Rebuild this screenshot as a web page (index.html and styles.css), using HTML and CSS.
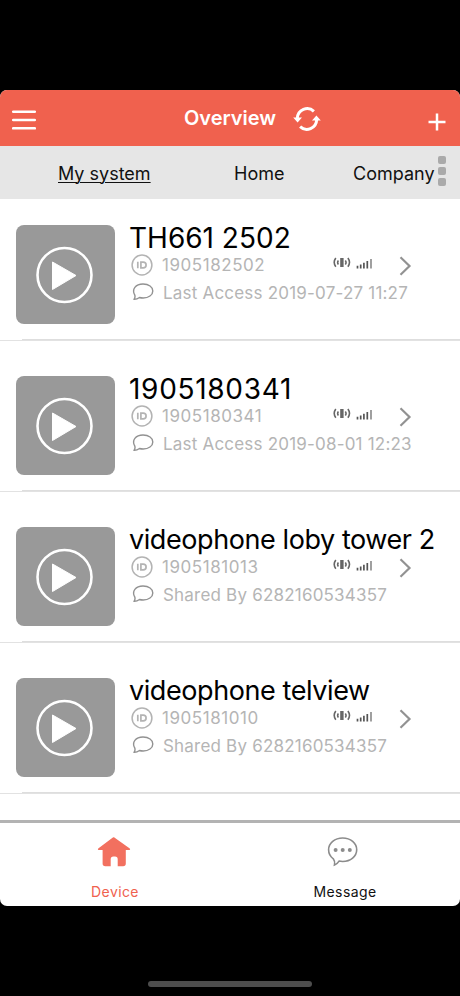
FILE: index.html
```html
<!DOCTYPE html>
<html lang="en">
<head>
    <meta charset="UTF-8">
    <meta name="viewport" content="width=device-width, initial-scale=1.0">
    <title>Overview</title>
    <link rel="stylesheet" href="styles.css">
</head>
<body>
    <!-- Shared icons -->
    <svg class="sprite" width="0" height="0">
        <symbol id="play" viewBox="0 0 99 99">
            <circle cx="48.5" cy="50" r="27" fill="none" stroke="#fff" stroke-width="2.6"/>
            <path d="M36.5 37v27.500L60 50.5z" fill="#fff" stroke="#fff" stroke-width="1" stroke-linejoin="round"/>
        </symbol>
        <symbol id="id-badge" viewBox="0 0 22 22">
            <circle cx="11" cy="11" r="9.900" fill="none" stroke="#b3b3b3" stroke-width="1.500"/>
            <path d="M6.800 7.700v6.600M9.900 8.100h2.300a2.900 2.900 0 0 1 0 5.800H9.900z" fill="none" stroke="#b3b3b3" stroke-width="1.700"/>
        </symbol>
        <symbol id="bubble" viewBox="0 0 22 18">
            <path d="M2.700 11.800C-.4 6.600 3.500 1 11 1c5.800 0 9.800 2.900 9.800 6.900 0 4.200-4.300 7.100-9.600 7.100-1.400 0-2.600-.1-3.700-.5-1.700 1.300-3.600 2-5.500 1.900.9-1.200 1.300-2.900.7-4.600z" fill="none" stroke="#929292" stroke-width="1.400" stroke-linejoin="round"/>
        </symbol>
        <symbol id="wireless" viewBox="0 0 18 11">
            <path d="M7.200 1h3.400v9H7.200z" fill="#666"/>
            <path d="M5.400 3.500q-1.500 2 0 4M12.300 3.500q1.500 2 0 4M2.800 1q-3.200 4.300 0 8.700M14.900 1q3.200 4.300 0 8.700" fill="none" stroke="#666" stroke-width="1.600"/>
        </symbol>
        <symbol id="signal" viewBox="0 0 17 11">
            <path d="M1.500 7.800v2.700M4.700 6.500v4M7.900 4.800v5.700M11.300 3v7.500" stroke="#555" stroke-width="1.700"/>
            <path d="M15 1v9.500" stroke="#777" stroke-width="1.400"/>
        </symbol>
        <symbol id="chevron" viewBox="0 0 14 20">
            <path d="M1.500 1.300l9 8.700-9 8.700" fill="none" stroke="#929292" stroke-width="2.200"/>
        </symbol>
    </svg>

    <div class="screen">
        <div class="header">
            <svg class="menu-icon" viewBox="0 0 24 20">
                <path d="M1.200 1.700h21.600M1.200 10h21.600M1.200 18.300h21.600" stroke="#fff" stroke-width="2.600" stroke-linecap="round"/>
            </svg>
            <h1>Overview</h1>
            <svg class="refresh-icon" viewBox="0 0 28 26">
                <path d="M4.300 12.300a9.900 10.200 0 0 1 16.600-7M23.700 13.700a9.900 10.200 0 0 1-16.600 7" fill="none" stroke="#fff" stroke-width="3"/>
                <path d="M.2 11.500h8.800l-4.400 5zM19 14.500h8.800l-4.400-5z" fill="#fff"/>
            </svg>
            <svg class="add-icon" viewBox="0 0 18 18">
                <path d="M9 .5v17M.5 9h17" stroke="#fff" stroke-width="2.500"/>
            </svg>
        </div>

        <div class="tabs">
            <span class="tab tab-system active">My system</span>
            <span class="tab tab-home">Home</span>
            <span class="tab tab-company">Company</span>
            <div class="more"><i></i><i></i><i></i></div>
        </div>

        <div class="device-list">
            <div class="device">
                <svg class="thumb"><use href="#play"/></svg>
                <div class="device-info">
                    <h2 class="name-model">TH661 2502</h2>
                    <div class="meta">
                        <svg class="id-icon"><use href="#id-badge"/></svg>
                        <span class="serial">1905182502</span>
                        <svg class="wireless-icon"><use href="#wireless"/></svg>
                        <svg class="signal-icon"><use href="#signal"/></svg>
                        <svg class="chevron-icon"><use href="#chevron"/></svg>
                    </div>
                    <div class="meta">
                        <svg class="bubble-icon"><use href="#bubble"/></svg>
                        <span class="access">Last Access 2019-07-27 11:27</span>
                    </div>
                </div>
            </div>
            <div class="device">
                <svg class="thumb"><use href="#play"/></svg>
                <div class="device-info">
                    <h2 class="name-number">1905180341</h2>
                    <div class="meta">
                        <svg class="id-icon"><use href="#id-badge"/></svg>
                        <span class="serial">1905180341</span>
                        <svg class="wireless-icon"><use href="#wireless"/></svg>
                        <svg class="signal-icon"><use href="#signal"/></svg>
                        <svg class="chevron-icon"><use href="#chevron"/></svg>
                    </div>
                    <div class="meta">
                        <svg class="bubble-icon"><use href="#bubble"/></svg>
                        <span class="access">Last Access 2019-08-01 12:23</span>
                    </div>
                </div>
            </div>
            <div class="device">
                <svg class="thumb"><use href="#play"/></svg>
                <div class="device-info">
                    <h2>videophone loby tower 2</h2>
                    <div class="meta">
                        <svg class="id-icon"><use href="#id-badge"/></svg>
                        <span class="serial">1905181013</span>
                        <svg class="wireless-icon"><use href="#wireless"/></svg>
                        <svg class="signal-icon"><use href="#signal"/></svg>
                        <svg class="chevron-icon"><use href="#chevron"/></svg>
                    </div>
                    <div class="meta">
                        <svg class="bubble-icon"><use href="#bubble"/></svg>
                        <span class="shared">Shared By 6282160534357</span>
                    </div>
                </div>
            </div>
            <div class="device">
                <svg class="thumb"><use href="#play"/></svg>
                <div class="device-info">
                    <h2>videophone telview</h2>
                    <div class="meta">
                        <svg class="id-icon"><use href="#id-badge"/></svg>
                        <span class="serial">1905181010</span>
                        <svg class="wireless-icon"><use href="#wireless"/></svg>
                        <svg class="signal-icon"><use href="#signal"/></svg>
                        <svg class="chevron-icon"><use href="#chevron"/></svg>
                    </div>
                    <div class="meta">
                        <svg class="bubble-icon"><use href="#bubble"/></svg>
                        <span class="shared">Shared By 6282160534357</span>
                    </div>
                </div>
            </div>
        </div>

        <div class="bottom-nav">
            <div class="nav-item active">
                <svg class="nav-icon" viewBox="0 0 34 32">
                    <path d="M17 1.300L32.800 12.600q1 1.500-.6 1.500H28.800v13.400q0 2.700-2.700 2.700h-5.400v-7q0-2.700-2.700-2.700h-1.600q-2.700 0-2.700 2.700v7H8.300q-2.700 0-2.700-2.700V14.100H1.800q-1.600 0-.6-1.500L15.200 1.900q1-.9 1.800-.6z" fill="#f2705f"/>
                </svg>
                <span>Device</span>
            </div>
            <div class="nav-item nav-message">
                <svg class="nav-icon" viewBox="0 0 34 32">
                    <path d="M7.300 22.800C4.300 20.600 2.600 17.400 2.600 13.800 2.600 7.200 8.800 2 16.700 2s14 5.200 14 11.800c0 6.700-6.200 11.700-14 11.700-1.300 0-2.500-.1-3.600-.4-1.200 1.900-2.700 3-4.600 3.800.5-2.200.1-4.400-1.200-6.100z" fill="none" stroke="#8c8c8c" stroke-width="1.600"/>
                    <circle cx="9.600" cy="14" r="2" fill="#8c8c8c"/>
                    <circle cx="16.700" cy="14" r="2" fill="#8c8c8c"/>
                    <circle cx="23.800" cy="14" r="2" fill="#8c8c8c"/>
                </svg>
                <span>Message</span>
            </div>
        </div>
    </div>
    <div class="home-indicator"></div>
</body>
</html>
```
FILE: styles.css
```css
body {
    font-family: Inter, "Liberation Sans", sans-serif;
    background-color: #000;
    margin: 0;
    padding-top: 90px;
    height: 906px;
    overflow: hidden;
}

.sprite {
    display: none;
}

svg {
    flex-shrink: 0;
}

.screen {
    display: flex;
    flex-direction: column;
    height: 816px;
    background-color: #fff;
    border-radius: 7px;
    overflow: hidden;
}

.header {
    display: flex;
    align-items: center;
    height: 56px;
    padding: 0 14px 0 12px;
    background-color: #f0614e;
    color: #fff;
}

.menu-icon {
    width: 24px;
    height: 20px;
    margin-top: 4px;
}

h1 {
    width: 92px;
    margin: 0 0 0 148px;
    font-size: 20px;
    font-weight: 600;
    letter-spacing: 0;
    white-space: nowrap;
}

.refresh-icon {
    width: 28px;
    height: 26px;
    margin: 2px 0 0 17px;
}

.add-icon {
    width: 18px;
    height: 18px;
    margin: 7px 0 0 auto;
}

.tabs {
    display: flex;
    align-items: center;
    height: 53px;
    background-color: #e6e6e6;
    color: #111;
    font-size: 18px;
}

.tab {
    margin-top: 1px;
    white-space: nowrap;
}

.tab-system {
    width: 94px;
    margin-left: 58px;
}

.tab-home {
    width: 52px;
    margin-left: 82px;
}

.tab-company {
    width: 83px;
    margin-left: 67px;
}

.tab.active {
    text-decoration: underline;
    text-decoration-thickness: 1px;
    text-underline-offset: 2px;
}

.more {
    display: flex;
    flex-direction: column;
    gap: 3px;
    margin: -4px 0 0 2px;
}

.more i {
    width: 8px;
    height: 8px;
    border-radius: 2px;
    background-color: #aaa;
}

.device-list {
    flex: 1;
}

.device {
    display: flex;
    position: relative;
    height: 99px;
    padding: 35px 0 16px 16px;
    border-bottom: 1px solid #e2e2e2;
}

.device:first-child {
    padding-top: 26px;
}

/* inset part of the separator */
.device::after {
    content: "";
    position: absolute;
    left: 22px;
    right: 0;
    bottom: 0;
    height: 1px;
    background-color: #dedede;
}

.thumb {
    width: 99px;
    height: 99px;
    border-radius: 8px;
    background-color: #999;
}

.device-info {
    flex: 1;
    margin: -2px 0 0 15px;
}

h2 {
    margin: 0 0 0 -1px;
    font-size: 27px;
    line-height: 30px;
    height: 28px;
    font-weight: 400;
    letter-spacing: -0.42px;
    color: #000;
    white-space: nowrap;
}

.name-model {
    font-size: 28px;
    letter-spacing: 0;
}

.name-number {
    font-size: 28px;
    letter-spacing: 0.7px;
}

.meta {
    display: flex;
    align-items: center;
    height: 28px;
    font-size: 17px;
    letter-spacing: 0.2px;
    color: #b5b5b5;
    white-space: nowrap;
}

.id-icon {
    width: 22px;
    height: 22px;
    margin-left: 1px;
}

.bubble-icon {
    width: 22px;
    height: 18px;
    margin: -2px 0 0 2px;
}

.serial {
    width: 161px;
    margin-left: 9px;
    letter-spacing: 0.55px;
}

.access,
.shared {
    margin-left: 9px;
}

.wireless-icon {
    width: 18px;
    height: 11px;
    margin: -5px 0 0 10px;
}

.signal-icon {
    width: 17px;
    height: 11px;
    margin: -4px 0 0 5px;
}

.chevron-icon {
    width: 14px;
    height: 20px;
    margin: 1px 0 0 26px;
}

.bottom-nav {
    display: flex;
    height: 83px;
    border-top: 3px solid #b3b3b3;
    font-size: 14px;
    letter-spacing: 0.4px;
}

.nav-item {
    display: flex;
    flex: 1;
    flex-direction: column;
    align-items: center;
    padding-top: 13px;
    color: #111;
}

.nav-item.active {
    color: #f0614e;
}

.nav-icon {
    width: 34px;
    height: 32px;
    margin: 0 2px 15px 0;
}

.nav-message .nav-icon {
    margin-right: 4px;
}

.home-indicator {
    width: 164px;
    height: 6px;
    margin: 75px auto 0;
    border-radius: 3px;
    background-color: #4d4d4d;
}
```
